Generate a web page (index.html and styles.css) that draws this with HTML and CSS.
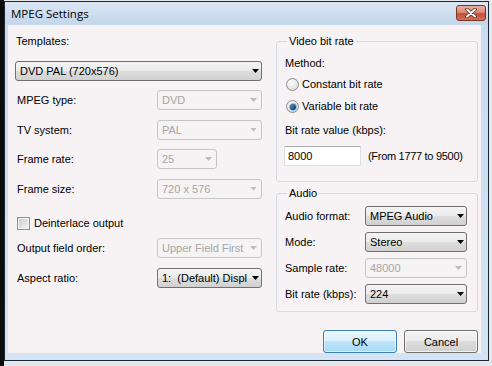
FILE: index.html
```html
<!DOCTYPE html>
<html>
<head>
<meta charset="utf-8">
<title>MPEG Settings</title>
<link rel="stylesheet" href="styles.css">
</head>
<body>
<div class="window">
  <div class="titlebar">
    <span class="title">MPEG Settings</span>
    <span class="close">
      <svg width="14" height="10" viewBox="0 0 14 10">
        <path d="M3 1.5 L11 8.5 M11 1.5 L3 8.5" stroke="#5a2218" stroke-width="3.6" stroke-linecap="round"/>
        <path d="M3 1.5 L11 8.5 M11 1.5 L3 8.5" stroke="#fff" stroke-width="2" stroke-linecap="round"/>
      </svg>
    </span>
  </div>
  <div class="client">
    <div class="left">
      <div class="caption">Templates:</div>
      <div class="combo tpl">DVD PAL (720x576)</div>
      <div class="fields">
        <div class="field"><span class="lbl">MPEG type:</span><span class="combo off">DVD</span></div>
        <div class="field"><span class="lbl">TV system:</span><span class="combo off">PAL</span></div>
        <div class="field"><span class="lbl">Frame rate:</span><span class="combo off short">25</span></div>
        <div class="field"><span class="lbl">Frame size:</span><span class="combo off">720 x 576</span></div>
      </div>
      <div class="check"><span class="box"></span>Deinterlace output</div>
      <div class="fields lower">
        <div class="field"><span class="lbl">Output field order:</span><span class="combo off">Upper Field First</span></div>
        <div class="field"><span class="lbl">Aspect ratio:</span><span class="combo">1:  (Default) Displ</span></div>
      </div>
    </div>
    <div class="right">
      <fieldset class="group video">
        <legend>Video bit rate</legend>
        <div class="line method">Method:</div>
        <div class="line radio-row first"><span class="radio"></span>Constant bit rate</div>
        <div class="line radio-row"><span class="radio on"></span>Variable bit rate</div>
        <div class="line rate-label">Bit rate value (kbps):</div>
        <div class="rate">
          <span class="edit">8000</span>
          <span class="range">(From 1777 to 9500)</span>
        </div>
      </fieldset>
      <fieldset class="group audio">
        <legend>Audio</legend>
        <div class="field"><span class="lbl">Audio format:</span><span class="combo">MPEG Audio</span></div>
        <div class="field"><span class="lbl">Mode:</span><span class="combo">Stereo</span></div>
        <div class="field"><span class="lbl">Sample rate:</span><span class="combo off">48000</span></div>
        <div class="field"><span class="lbl">Bit rate (kbps):</span><span class="combo">224</span></div>
      </fieldset>
      <div class="buttons">
        <span class="btn default">OK</span>
        <span class="btn">Cancel</span>
      </div>
    </div>
  </div>
</div>
</body>
</html>
```

FILE: styles.css
```css
* {
  box-sizing: border-box;
}
body {
  margin: 0;
  width: 492px;
  height: 366px;
  overflow: hidden;
  background: linear-gradient(90deg, #0c0c0c 4px, #e4e7eb 4px);
  font: 11px "Liberation Sans", Arial, sans-serif;
  color: #000;
}
.window {
  margin: 1px 0 0 4px;
  width: 485px;
  height: 360px;
  border: 1px solid #1d2733;
  background: linear-gradient(#dbe6f3, #c3d6eb 22px, #c9dbee 23px, #d4e4f4);
  display: flex;
  flex-direction: column;
  padding: 0 7px 7px 3px;
}
.titlebar {
  height: 23px;
  margin: 0 -7px 0 -3px;
  padding: 0 2px 0 6px;
  display: flex;
  align-items: center;
  justify-content: space-between;
}
.title {
  font: 11.5px "Open Sans", sans-serif;
  color: #000;
}
.close {
  align-self: flex-start;
  margin-top: 3px;
  width: 30px;
  height: 16px;
  border: 1px solid #7a3426;
  border-radius: 3px;
  background: linear-gradient(#eab0a1, #d98a76 45%, #c4503b 55%, #d07058);
  display: flex;
  align-items: center;
  justify-content: center;
}
.close svg {
  display: block;
}
.client {
  flex: 1;
  background: #f7f3f4;
  display: grid;
  grid-template-columns: 247px 202px;
  column-gap: 14px;
  align-items: start;
  padding: 10px 0 0 7px;
}
.caption {
  line-height: 13px;
  padding-left: 1px;
}
.combo {
  position: relative;
  display: flex;
  align-items: center;
  height: 20px;
  padding-left: 4px;
  border: 1px solid #707070;
  border-radius: 3px;
  background: linear-gradient(#f3f3f3, #ebebeb 50%, #dedede 50%, #d0d0d0);
  white-space: pre;
}
.combo::after {
  content: "";
  position: absolute;
  right: 2px;
  top: 7px;
  width: 7px;
  height: 4px;
  background: #000;
  clip-path: polygon(0 0, 100% 0, 50% 100%);
}
.combo.off {
  border-color: #c4c6c8;
  background: #f5f3f3;
  color: #a6a6a6;
}
.combo.off::after {
  background: #bdbdbd;
  right: 4px;
}
.tpl {
  margin-top: 13px;
}
.fields {
  display: flex;
  flex-direction: column;
  gap: 9.5px;
  margin-top: 9px;
}
.field {
  display: flex;
  align-items: center;
}
.left .lbl {
  width: 142px;
  padding-left: 2px;
}
.left .combo {
  flex: 1;
}
.left .combo.short {
  flex: none;
  width: 60px;
}
.check {
  display: flex;
  align-items: center;
  line-height: 13px;
  margin-top: 18px;
  padding-left: 2px;
}
.box {
  width: 13px;
  height: 13px;
  margin-right: 4px;
  border: 1px solid #8e8f8f;
  background: linear-gradient(135deg, #c5c9cf, #f4f4f4);
  box-shadow: inset 0 0 0 1px #f4f4f4;
}
.fields.lower {
  margin-top: 8.5px;
  gap: 10px;
}
.group {
  margin: 0;
  min-width: 0;
  border: 1px solid #d2dbe2;
  border-radius: 3px;
  padding: 0 10px 0 8px;
}
.group legend {
  line-height: 13px;
  padding: 0 2px;
  margin-left: 2px;
}
.line {
  line-height: 13px;
}
.method {
  margin-top: 9px;
}
.radio-row {
  display: flex;
  align-items: center;
  margin-top: 9px;
}
.radio-row.first {
  margin-top: 8px;
}
.radio {
  position: relative;
  width: 13px;
  height: 13px;
  margin: 0 3px 0 1px;
  border: 1px solid #8d8d8d;
  border-radius: 50%;
  background: radial-gradient(circle at 40% 35%, #fdfdfd, #e4e4e4 60%, #cfcfcf);
}
.radio.on::after {
  content: "";
  position: absolute;
  left: 2.5px;
  top: 2.5px;
  width: 6px;
  height: 6px;
  border-radius: 50%;
  background: radial-gradient(circle at 40% 35%, #4d84b8, #133a5c 70%);
  box-shadow: 0 0 0 1px #8cc0e8;
}
.rate-label {
  margin-top: 11px;
}
.rate {
  display: flex;
  align-items: center;
  white-space: nowrap;
  margin: 9px -10px 15px -1px;
}
.edit {
  display: flex;
  align-items: center;
  flex: none;
  width: 77px;
  height: 20px;
  padding-left: 3px;
  background: #fff;
  border: 1px solid #dbdfe6;
  border-top-color: #abadb3;
}
.range {
  margin-left: 7px;
  letter-spacing: -0.3px;
}
.audio {
  margin-top: 5px;
  padding-bottom: 7px;
  display: flex;
  flex-direction: column;
  gap: 6px;
}
.audio legend {
  margin-bottom: 6px;
}
.audio .lbl {
  width: 80px;
}
.audio .combo {
  flex: 1;
}
.buttons {
  display: flex;
  justify-content: flex-end;
  gap: 7px;
  margin-top: 18px;
}
.btn {
  display: flex;
  align-items: center;
  justify-content: center;
  width: 74px;
  height: 23px;
  border: 1px solid #707070;
  border-radius: 3px;
  background: linear-gradient(#f3f3f3, #ebebeb 50%, #dddddd 50%, #cfcfcf);
  box-shadow: inset 0 0 0 1px rgba(255, 255, 255, 0.7);
}
.btn.default {
  border-color: #3c7fb1;
  background: linear-gradient(#eaf6fd, #d9f0fc 50%, #bee6fd 50%, #a7d9f5);
  box-shadow: inset 0 0 0 1px rgba(255, 255, 255, 0.6);
}
```
